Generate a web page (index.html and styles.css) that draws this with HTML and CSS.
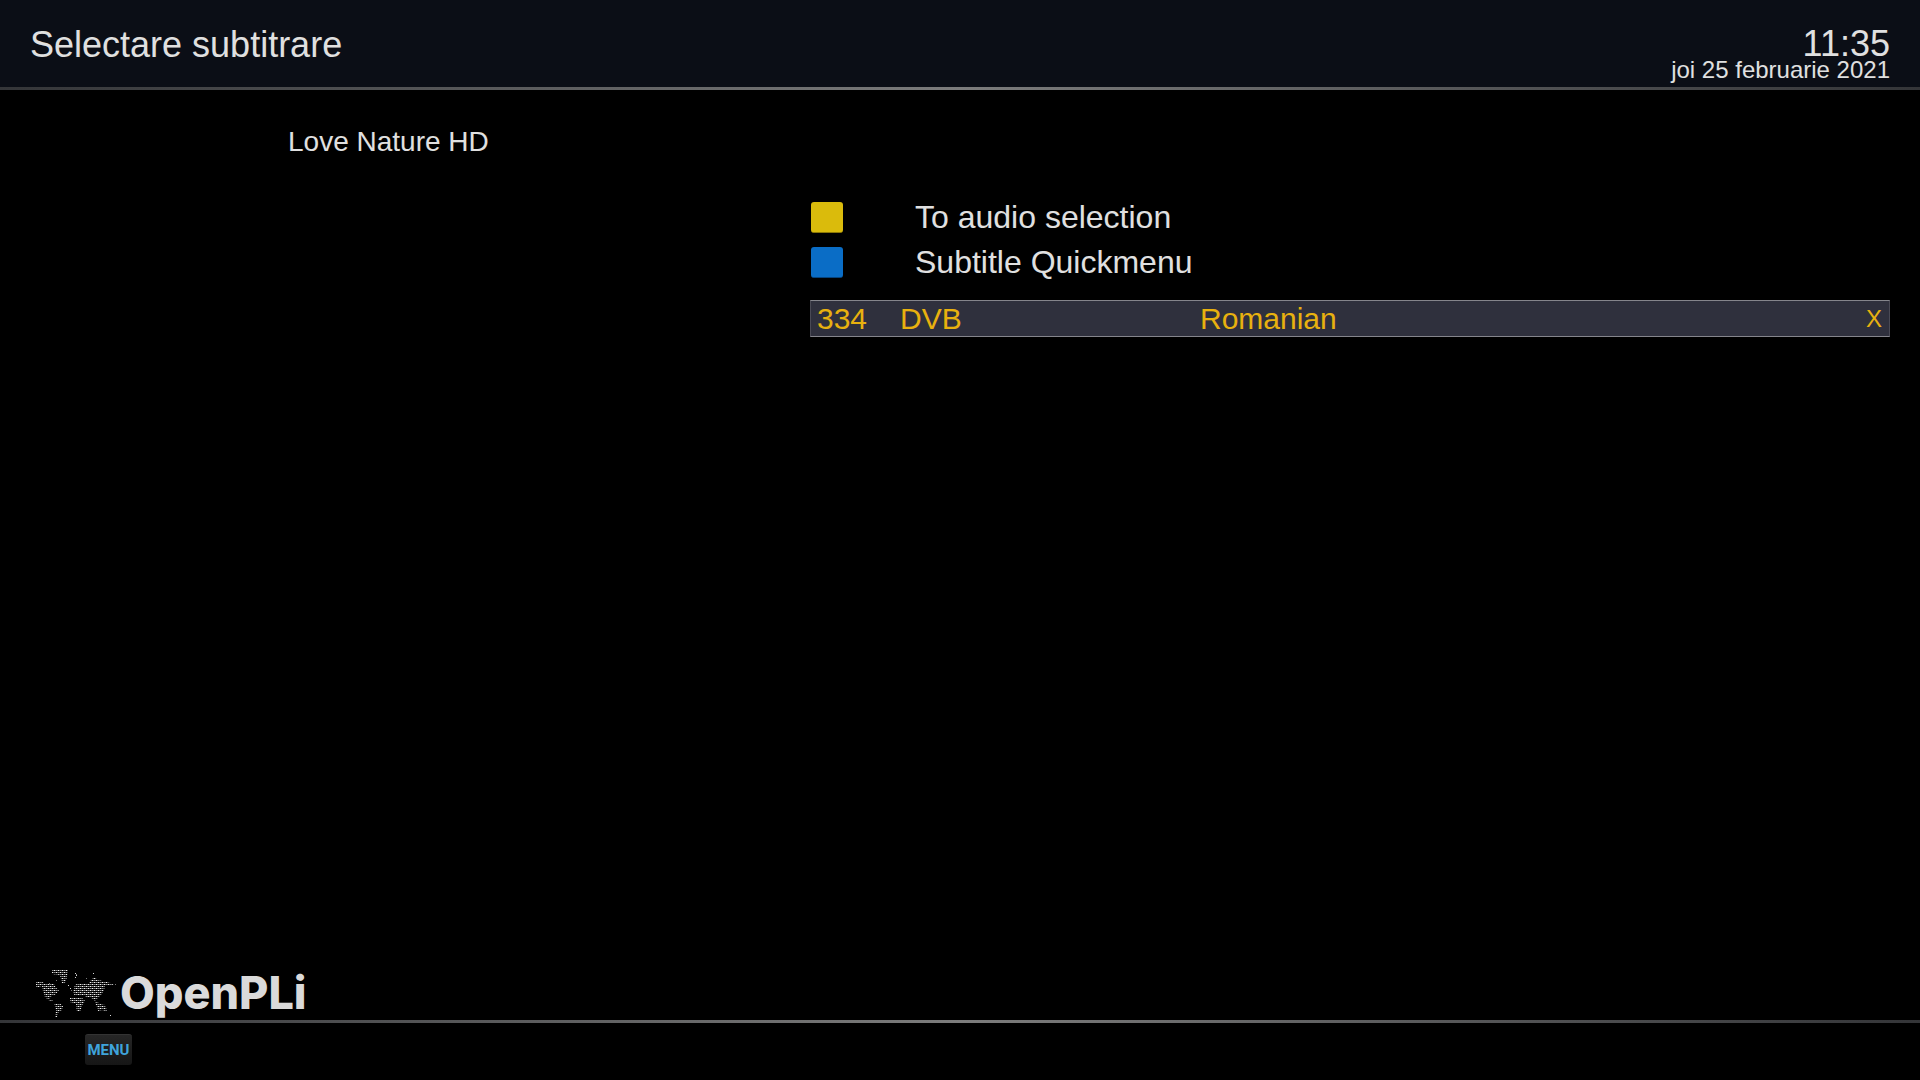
FILE: index.html
```html
<!DOCTYPE html>
<html lang="ro">
<head>
<meta charset="utf-8">
<title>Selectare subtitrare</title>
<link rel="stylesheet" href="styles.css">
</head>
<body>
<header class="topbar">
  <h1 class="title">Selectare subtitrare</h1>
  <div class="clock">
    <time class="clock-time">11:35</time>
    <time class="clock-date" datetime="2021-02-25">joi 25 februarie 2021</time>
  </div>
</header>
<main class="content">
  <h2 class="channel">Love Nature HD</h2>
  <section class="panel">
    <ul class="actions">
      <li><button class="action" type="button"><span class="key key-yellow"></span>To audio selection</button></li>
      <li><button class="action" type="button"><span class="key key-blue"></span>Subtitle Quickmenu</button></li>
    </ul>
    <table class="tracks">
      <tbody>
        <tr>
          <td class="col-id">334</td>
          <td class="col-type">DVB</td>
          <td class="col-lang">Romanian</td>
          <td class="col-active">X</td>
        </tr>
      </tbody>
    </table>
  </section>
</main>
<div class="brand">
  <svg class="map" width="84" height="54" viewBox="0 0 84 54" aria-hidden="true">
    <defs>
      <pattern id="dots" width="4" height="4" patternUnits="userSpaceOnUse">
        <path fill="#f4f4f4" d="M0 0h1v1h-1zM2 2h1v1h-1z"/>
        <path fill="#8a8a8a" d="M2 0h1v1h-1zM0 2h1v1h-1z"/>
        <path fill="#5c5c5c" d="M1 0h1v1h-1zM3 0h1v1h-1zM1 2h1v1h-1zM3 2h1v1h-1z"/>
      </pattern>
    </defs>
    <g fill="url(#dots)">
      <path d="M2 16L6 15L12 18L20 18L22 22L25 24L22 28L18 30L15 32L19 35L17 36L11 31L9 25L8 20L2 22Z"/>
      <path d="M18 4L24 3L34 4L33 11L31 17L28 17L26 9L18 8Z"/>
      <path d="M20 37L25 37L29 40L28 44L24 47L23 51L21 51L22 44Z"/>
      <path d="M41 19L45 17L55 17L57 14L60 11L64 14L73 16L80 18L76 20L71 20L70 24L68 28L64 32L61 35L56 31L52 31L50 29L41 30L39 26Z"/>
      <path d="M36 32L47 31L51 35L48 40L46 46L43 46L42 38L36 36Z"/>
      <path d="M62 35L66 38L71 39L73 44L71 46L69 44L64 45L63 41L61 37Z"/>
    </g>
    <path fill="#d8d8d8" d="M41 7h1v1h-1zM42 9h1v1h-1zM41 11h1v1h-1zM59 7h1v1h-1zM34 19h1v1h-1zM76 49h1v1h-1zM36 22h1v1h-1z"/>
    <path fill="#777" d="M42 8h1v1h-1zM52 12h1v1h-1zM15 17h1v1h-1zM22 14h1v1h-1zM81 18h1v1h-1zM37 24h1v1h-1z"/>
  </svg>
  <span class="brand-name">OpenPLi</span>
</div>
<footer class="bottombar">
  <button class="menu-key" type="button">MENU</button>
</footer>
</body>
</html>
```
FILE: styles.css
```css
* {
  box-sizing: border-box;
}

body {
  margin: 0;
  min-height: 100vh;
  display: flex;
  flex-direction: column;
  background: #000;
  color: #e0e0e0;
  font-family: "Liberation Sans", Arial, sans-serif;
}

h1,
h2,
ul {
  margin: 0;
  padding: 0;
  font-weight: 400;
  list-style: none;
}

button {
  font: inherit;
  color: inherit;
  border: 0;
}

.topbar {
  display: flex;
  justify-content: space-between;
  padding: 25px 30px 7px;
  background: #0b0e16;
  border-bottom: 3px solid;
  border-image: linear-gradient(90deg, #343538, #7c7c7c 50%, #343538) 1;
}

.title {
  font-size: 36px;
  line-height: 40px;
}

.clock {
  display: flex;
  flex-direction: column;
  align-items: flex-end;
  padding-top: 3px;
}

.clock-time {
  font-size: 36px;
  line-height: 32px;
}

.clock-date {
  font-size: 24px;
  line-height: 20px;
  white-space: nowrap;
}

.content {
  flex: 1;
  display: grid;
  grid-template-columns: 780fr 1080fr;
  grid-template-rows: auto 1fr;
  padding: 36px 30px 0;
}

.channel {
  grid-column: 1;
  padding-left: 258px;
  font-size: 28px;
  line-height: 32px;
}

.panel {
  grid-area: 2 / 2;
  padding-top: 37px;
}

.action {
  display: flex;
  align-items: center;
  gap: 72px;
  padding: 0 0 0 1px;
  height: 45px;
  background: none;
  font-size: 32px;
}

.key {
  width: 32px;
  height: 31px;
  border-radius: 3px;
}

.key-yellow {
  background: #dabb0c;
  border-bottom: 1px solid #8b7706;
}

.key-blue {
  background: #0a6dc6;
  border-bottom: 1px solid #06447e;
}

.tracks {
  width: 100%;
  margin-top: 15px;
  table-layout: fixed;
  border-collapse: separate;
  border-spacing: 0;
  background: #2f303d;
  border: 1px solid #4a4a55;
  border-top-color: #85858c;
  border-bottom-color: #85858c;
  color: #e8b10f;
  font-size: 30px;
  line-height: 35px;
}

.tracks td {
  padding: 0;
}

.tracks .col-id {
  width: 89px;
  padding-left: 6px;
}

.col-type {
  width: 300px;
}

.tracks .col-active {
  width: 60px;
  padding-right: 7px;
  text-align: right;
  font-size: 24px;
}

.brand {
  display: flex;
  align-items: center;
  gap: 2px;
  padding: 0 34px;
  height: 54px;
}

.brand-name {
  font-family: Inter, sans-serif;
  font-size: 45px;
  font-weight: 800;
  line-height: 48px;
  color: #dadada;
}

.bottombar {
  height: 60px;
  padding: 11px 85px;
  border-top: 3px solid;
  border-image: linear-gradient(90deg, #343538, #7c7c7c 50%, #343538) 1;
}

.menu-key {
  display: block;
  width: 47px;
  height: 31px;
  padding: 0;
  border-radius: 3px;
  border-top: 1px solid #333;
  background: linear-gradient(#262626, #161616);
  color: #3fa4dc;
  font-family: Roboto, sans-serif;
  font-size: 15px;
  font-weight: 700;
  line-height: 30px;
}
```
